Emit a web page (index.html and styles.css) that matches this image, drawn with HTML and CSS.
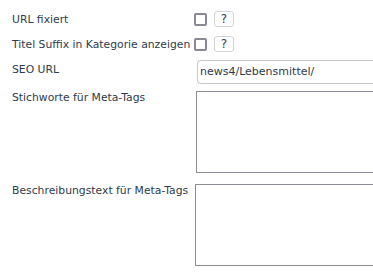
FILE: index.html
```
<!DOCTYPE html>
<html>
<head>
<meta charset="utf-8">
<link rel="stylesheet" href="styles.css">
</head>
<body>
<div class="form">
  <div class="row row-check">
    <label class="label">URL fixiert</label>
    <div class="field">
      <span class="checkbox"></span>
      <span class="help">?</span>
    </div>
  </div>
  <div class="row row-check">
    <label class="label">Titel Suffix in Kategorie anzeigen</label>
    <div class="field">
      <span class="checkbox"></span>
      <span class="help">?</span>
    </div>
  </div>
  <div class="row row-input">
    <label class="label">SEO URL</label>
    <div class="field">
      <div class="input">news4/Lebensmittel/</div>
    </div>
  </div>
  <div class="row row-area">
    <label class="label">Stichworte für Meta-Tags</label>
    <div class="field">
      <div class="textarea"></div>
    </div>
  </div>
  <div class="row row-area row-area2">
    <label class="label">Beschreibungstext für Meta-Tags</label>
    <div class="field">
      <div class="textarea"></div>
    </div>
  </div>
</div>
</body>
</html>
```
FILE: styles.css
```
html, body {
  margin: 0;
  padding: 0;
  background: #ffffff;
  overflow: hidden;
}
body {
  font-family: "DejaVu Sans", Verdana, sans-serif;
  font-size: 10.8px;
  color: #2e3b4c;
}
.form {
  padding: 8px 0 0 12px;
  display: flex;
  flex-direction: column;
}
.row {
  display: grid;
  grid-template-columns: 183px 1fr;
}
.label {
  line-height: 23px;
  white-space: nowrap;
}
.row-check {
  height: 25px;
}
.field {
  display: flex;
  align-items: flex-start;
  min-width: 0;
}
.row-check .field {
  padding-top: 4px;
  gap: 7px;
}
.checkbox {
  width: 9px;
  height: 9px;
  border: 2px solid #8a8893;
  border-radius: 2px;
  margin-top: 1px;
  margin-left: -1px;
}
.help {
  width: 18px;
  height: 14px;
  border: 1px solid #d4d4d8;
  border-radius: 3px;
  font-size: 12px;
  line-height: 15px;
  text-align: center;
  color: #2e3b4c;
  margin-top: -1px;
}
.row-input {
  height: 31px;
  padding-top: 2px;
}
.row-input .label {
  line-height: 20px;
}
.input {
  margin-left: 2px;
  width: 300px;
  height: 24px;
  border: 1px solid #c9c9cc;
  border-right: none;
  border-radius: 4px 0 0 4px;
  box-sizing: border-box;
  padding-left: 2px;
  line-height: 22px;
  font-size: 11px;
  color: #2e3b4c;
}
.row-area {
  height: 93px;
}
.row-area .label {
  line-height: 14px;
}
.textarea {
  margin-left: 1px;
  width: 300px;
  height: 82px;
  border: 1px solid #8e8c97;
  border-right: none;
  box-sizing: border-box;
  background: #fff;
}
.row-area2 .textarea {
  margin-left: 0;
}
```
